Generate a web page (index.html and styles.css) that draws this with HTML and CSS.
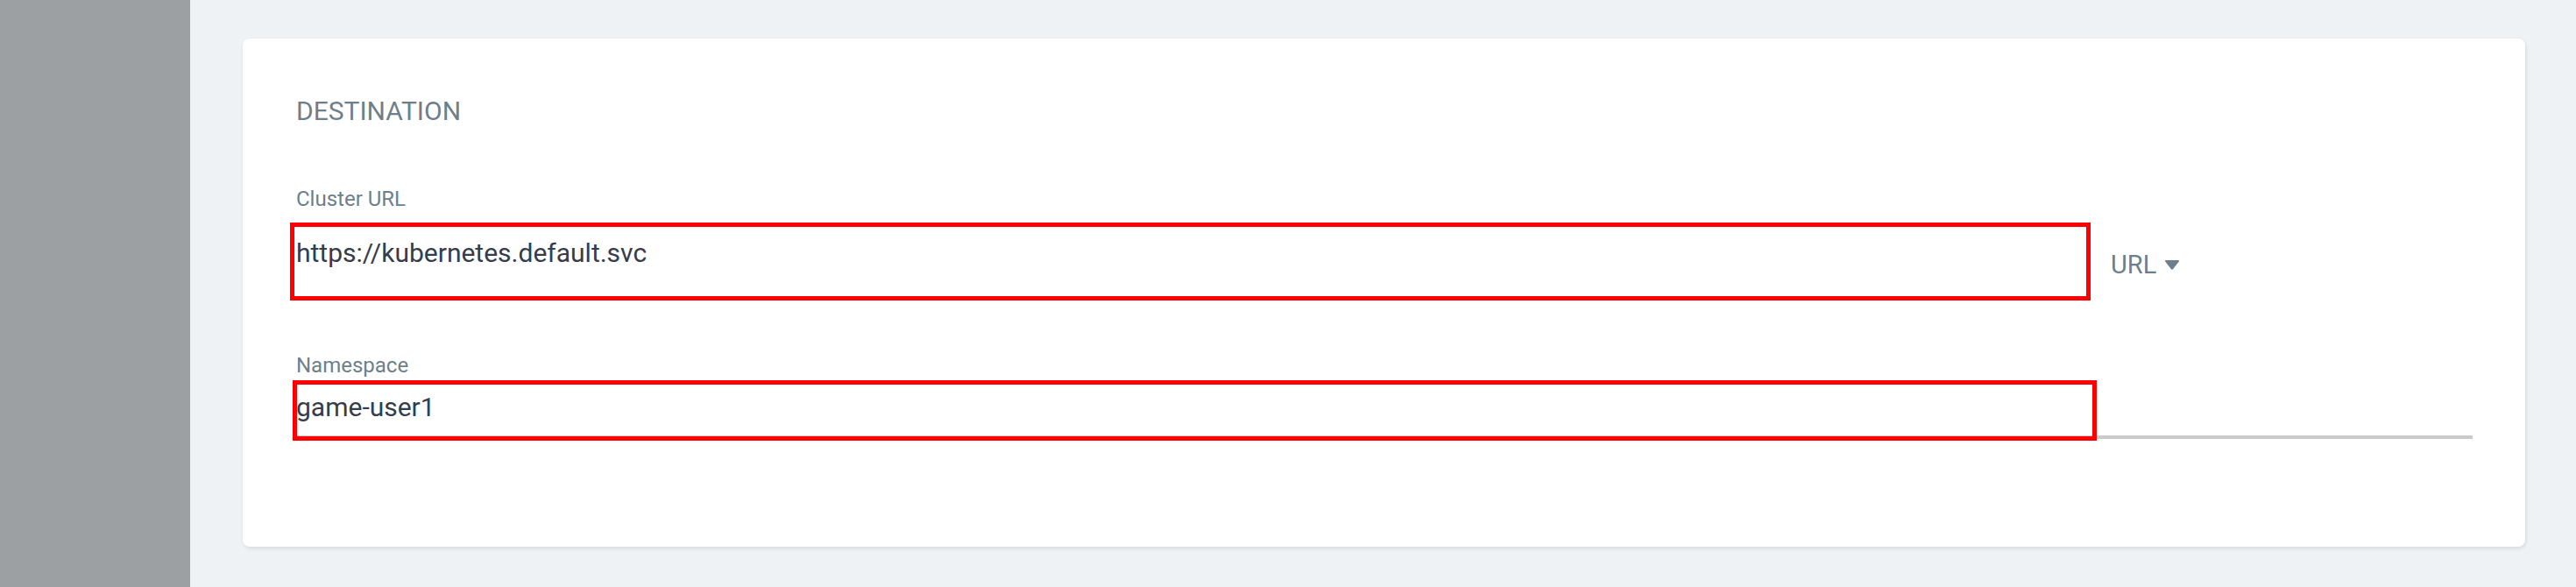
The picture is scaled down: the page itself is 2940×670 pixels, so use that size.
FILE: index.html
```html
<!DOCTYPE html>
<html>

<head>
    <meta charset="UTF-8" />
    <title>Destination</title>
    <link rel="stylesheet" href="styles.css">
</head>

<body>
    <div class="layout">
        <aside class="sidebar"></aside>

        <main class="content">
            <section class="card">
                <h2 class="card-title">DESTINATION</h2>

                <div class="field field-first">
                    <label class="field-label">Cluster URL</label>
                    <div class="control">
                        <div class="input-wrap">
                            <input class="input input-tall" value="https://kubernetes.default.svc" />
                            <span class="mark mark-url"></span>
                        </div>
                        <div class="dropdown">
                            <span>URL</span>
                            <svg class="caret" width="18" height="11" viewBox="0 0 18 11">
                                <path d="M1.2 1.6 Q0.2 0 2.2 0 H15.8 Q17.8 0 16.8 1.6 L10.2 10 Q9 11.3 7.8 10 Z" />
                            </svg>
                        </div>
                    </div>
                </div>

                <div class="field field-second">
                    <label class="field-label">Namespace</label>
                    <div class="input-wrap">
                        <input class="input input-short" value="game-user1" />
                        <span class="mark mark-ns"></span>
                    </div>
                </div>
            </section>
        </main>
    </div>
</body>

</html>
```

FILE: styles.css
```css
html,
body {
    margin: 0;
    height: 100%;
}

body {
    font-family: Roboto, "Liberation Sans", sans-serif;
    background: #eef2f5;
}

.layout {
    display: flex;
    height: 670px;
}

.sidebar {
    width: 217px;
    flex: none;
    background: #9ca0a3;
}

.content {
    flex: 1;
    padding: 44px 58px 0 60px;
}

.card {
    background: white;
    border-radius: 8px;
    box-shadow: 1px 2px 4px rgba(0, 0, 0, 0.1);
    padding: 65px 60px 123px 61px;
}

.card-title {
    margin: 0;
    font-size: 30px;
    line-height: 36px;
    font-weight: 400;
    color: #6d7f8b;
}

.field-first {
    margin-top: 68px;
}

.field-second {
    margin-top: 61px;
}

.field-label {
    display: block;
    font-size: 24px;
    line-height: 28px;
    color: #6d7f8b;
}

.control {
    display: flex;
    align-items: flex-start;
}

.control .input-wrap {
    flex: 1;
}

.input-wrap {
    position: relative;
    margin-top: 29px;
}

.field-second .input-wrap {
    margin-top: 15px;
}

.input {
    display: block;
    box-sizing: content-box;
    width: 100%;
    height: 36px;
    margin: 0;
    padding: 0;
    border: none;
    border-bottom: 4px solid #cacaca;
    outline: none;
    background: transparent;
    font-family: inherit;
    font-size: 30px;
    color: #363c4a;
}

.input-tall {
    padding-bottom: 32px;
}

.input-short {
    padding-bottom: 15px;
}

/* red highlight drawn over the inputs */
.mark {
    position: absolute;
    border: 5px solid #ff0000;
    pointer-events: none;
}

.mark-url {
    top: -16px;
    left: -7px;
    right: -6px;
    bottom: -1px;
}

.mark-ns {
    top: -12px;
    left: -4px;
    right: 429px;
    bottom: -2px;
}

.dropdown {
    width: 413px;
    padding-left: 29px;
    margin-top: 43px;
    display: flex;
    align-items: center;
    gap: 9px;
    font-size: 29px;
    line-height: 36px;
    color: #6d7f8b;
}

.caret {
    fill: #6d7f8b;
    margin-top: 1px;
}
```
